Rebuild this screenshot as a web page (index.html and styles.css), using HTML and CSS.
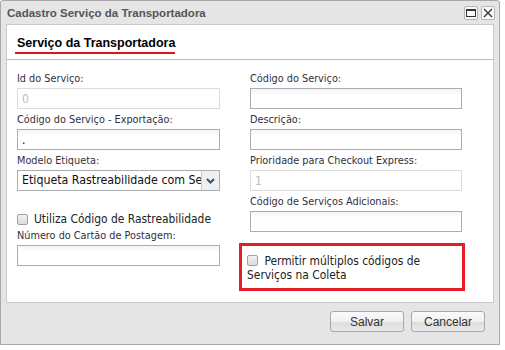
FILE: index.html
```html
<!DOCTYPE html>
<html lang="pt-BR">
<head>
    <meta charset="UTF-8">
    <title>Cadastro Serviço da Transportadora</title>
    <link rel="stylesheet" href="styles.css">
</head>
<body>
    <div class="window">
        <div class="titlebar">
            <span class="title">Cadastro Serviço da Transportadora</span>
            <div class="tools">
                <span class="tool">
                    <svg width="10" height="8" viewBox="0 0 10 8"><rect x="0.5" y="0.5" width="9" height="7" fill="none" stroke="#333"/><rect x="0" y="0" width="10" height="2" fill="#333"/></svg>
                </span>
                <span class="tool">
                    <svg width="10" height="10" viewBox="0 0 10 10"><path d="M1 1L9 9M9 1L1 9" stroke="#333" stroke-width="1.3"/></svg>
                </span>
            </div>
        </div>

        <div class="panel">
            <div class="panel-head">
                <h2>Serviço da Transportadora</h2>
            </div>

            <form class="fields">
                <div class="col">
                    <label>Id do Serviço:</label>
                    <input type="text" value="0" disabled>

                    <label>Código do Serviço - Exportação:</label>
                    <input type="text" value=".">

                    <label>Modelo Etiqueta:</label>
                    <div class="select">
                        <span class="select-text">Etiqueta Rastreabilidade com Serviço</span>
                        <span class="select-btn">
                            <svg width="9" height="6" viewBox="0 0 9 6"><path d="M1 1L4.5 4.5L8 1" fill="none" stroke="#2f4f86" stroke-width="2"/></svg>
                        </span>
                    </div>

                    <div class="check check-left">
                        <span class="box"></span>
                        <span>Utiliza Código de Rastreabilidade</span>
                    </div>

                    <label class="tight">Número do Cartão de Postagem:</label>
                    <input type="text" class="focus">
                </div>

                <div class="col col-right">
                    <label>Código do Serviço:</label>
                    <input type="text">

                    <label>Descrição:</label>
                    <input type="text">

                    <label>Prioridade para Checkout Express:</label>
                    <input type="text" value="1" disabled>

                    <label>Código de Serviços Adicionais:</label>
                    <input type="text">

                    <div class="highlight">
                        <span class="box"></span>
                        Permitir múltiplos códigos de Serviços na Coleta
                    </div>
                </div>
            </form>
        </div>

        <div class="footer">
            <button type="button" class="btn">Salvar</button>
            <button type="button" class="btn">Cancelar</button>
        </div>
    </div>
</body>
</html>
```

FILE: styles.css
```css
body {
    margin: 0;
    background-color: white;
    font-family: "Liberation Sans", Arial, sans-serif;
}

.window {
    width: 498px;
    height: 343px;
    border: 1px solid #a8a8a8;
    border-radius: 3px 3px 0 0;
    background-color: #e5e5e5;
    display: flex;
    flex-direction: column;
}

.titlebar {
    height: 23px;
    display: flex;
    align-items: center;
    justify-content: space-between;
    padding: 0 4px 0 6px;
}

.title {
    font-size: 11.5px;
    font-weight: bold;
    color: #555;
}

.tools {
    display: flex;
    gap: 3px;
}

.tool {
    width: 12px;
    height: 12px;
    border: 1px solid #b5b5b5;
    border-radius: 2px;
    background-color: #f8f8f8;
    display: flex;
    align-items: center;
    justify-content: center;
}

.panel {
    margin: 0 5px 0 5px;
    height: 277px;
    background-color: white;
    border: 1px solid #c9c9c9;
}

.panel-head {
    height: 34px;
    border-bottom: 1px solid #a7bfdf;
    padding-left: 8px;
}

.panel-head h2 {
    display: inline-block;
    margin: 0;
    margin-top: 11px;
    padding: 0 0 1px 2px;
    font-size: 12.5px;
    font-weight: bold;
    color: #000;
    border-bottom: 2px solid #e3131c;
    line-height: 15px;
}

.fields {
    display: flex;
    gap: 30px;
    padding: 8px 0 0 10px;
    font-family: "DejaVu Sans Condensed", "DejaVu Sans", sans-serif;
}

.col {
    width: 203px;
    display: flex;
    flex-direction: column;
}

.col-right {
    width: 212px;
}

label {
    font-size: 10.8px;
    color: #33303d;
    height: 20px;
    line-height: 21px;
}

label.tight {
    margin-top: -3px;
}

input {
    box-sizing: border-box;
    height: 21px;
    margin: 0;
    padding: 2px 4px;
    font-family: "DejaVu Sans Condensed", "DejaVu Sans", sans-serif;
    font-size: 12px;
    border: 1px solid #abadb3;
    background: linear-gradient(#f4f4f4, white 6px);
    outline: none;
}

input:disabled {
    border-color: #dcdcdc;
    color: #bcbcbc;
    background: white;
}

input.focus {
    border-color: #8fb3de;
}

.select {
    height: 21px;
    box-sizing: border-box;
    border: 1px solid #abadb3;
    display: flex;
    font-size: 12.3px;
}

.select-text {
    flex: 1;
    overflow: hidden;
    white-space: nowrap;
    padding: 2px 0 0 4px;
    color: #111;
}

.select-btn {
    width: 17px;
    flex-shrink: 0;
    border-left: 1px solid #c8c8c8;
    background-color: #f0f0f0;
    display: flex;
    align-items: center;
    justify-content: center;
}

.check {
    display: flex;
    align-items: center;
    gap: 6px;
    font-size: 11.9px;
    color: #222;
    white-space: nowrap;
}

.check-left {
    margin-top: 19px;
    height: 18px;
}

.box {
    display: inline-block;
    flex-shrink: 0;
    width: 11px;
    height: 11px;
    border: 1px solid #a0a0a0;
    border-radius: 2px;
    background: linear-gradient(#f2f2f2, #dcdcdc);
    box-sizing: border-box;
}

.highlight {
    margin: 11px -3px 0 -11px;
    padding: 8px 30px 6px 5px;
    border: 3px solid #e31e26;
    font-size: 11.9px;
    color: #222;
    line-height: 14px;
}

.highlight .box {
    margin-right: 3px;
    vertical-align: -1px;
}

.footer {
    flex: 1;
    display: flex;
    justify-content: flex-end;
    align-items: flex-start;
    gap: 7px;
    padding: 8px 14px 0 0;
}

.btn {
    width: 74px;
    height: 21px;
    border: 1px solid #a9a9a9;
    border-radius: 3px;
    background: linear-gradient(#fafafa, #f0f0f0 50%, #dcdcdc 50%, #e8e8e8);
    font-family: "Liberation Sans", Arial, sans-serif;
    font-size: 12px;
    color: #333;
    padding: 0;
}
```
